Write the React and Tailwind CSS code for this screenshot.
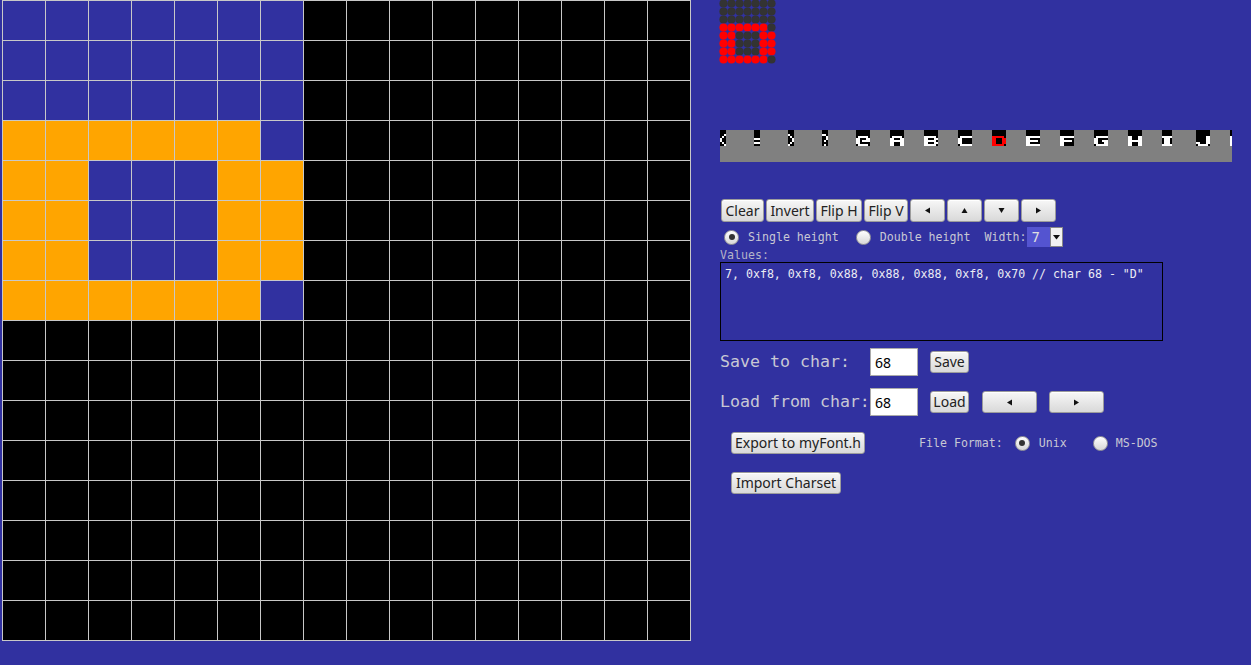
import React from "react";

const mono = { fontFamily: '"DejaVu Sans Mono", monospace' };

// glyph being edited: 7 columns used, 8 rows used
const pixels = [
  "0000000",
  "0000000",
  "0000000",
  "1111110",
  "1100011",
  "1100011",
  "1100011",
  "1111110",
];
const charWidth = 7;
const charHeight = 8;

const isOn = (r, c) => r < charHeight && c < charWidth && pixels[r][c] === "1";

// charset strip, 8 rows per glyph, drawn 2x
const strip = [
  ["...", "...", "..#", ".#.", "#..", "#..", ".#.", "..#"],
  ["...", "...", "...", "...", "###", "...", "###", "..."],
  ["...", "...", "#..", ".#.", "..#", "..#", ".#.", "#.."],
  ["...", "...", "##.", "..#", "..#", ".#.", "...", ".#."],
  [".......", ".......", ".......", ".#####.", "##...##", "##.####", "##.....", ".#####."],
  [".......", ".......", ".......", ".#####.", "##...##", "#######", "##...##", "##...##"],
  [".......", ".......", ".......", "######.", "##...##", "######.", "##...##", "######."],
  [".......", ".......", ".......", ".######", "##.....", "##.....", "##.....", ".######"],
  [".......", ".......", ".......", "######.", "##...##", "##...##", "##...##", "######."],
  [".......", ".......", ".......", "#######", "##.....", "######.", "##.....", "#######"],
  [".......", ".......", ".......", "#######", "##.....", "######.", "##.....", "##....."],
  [".......", ".......", ".......", ".######", "##.....", "##..###", "##...##", ".######"],
  [".......", ".......", ".......", "##...##", "##...##", "#######", "##...##", "##...##"],
  [".....", ".....", ".....", "#####", ".###.", ".###.", ".###.", "#####"],
  [".......", ".......", ".......", ".....##", ".....##", ".....##", "##...##", ".#####."],
  [".......", ".......", ".......", "##..##.", "##.##..", "####...", "##.##..", "##..##."],
];

function CharStrip() {
  return (
    <svg width="512" height="32" className="block">
      <rect width="512" height="32" fill="#808080" />
      {strip.map((g, i) => {
        const x0 = i * 34;
        const w = g[0].length * 2;
        const red = i === 8;
        return (
          <g key={i}>
            <rect x={x0} y="0" width={w} height="16" fill="#000" />
            {g.map((row, r) =>
              row.split("").map((ch, c) =>
                ch === "#" ? (
                  <rect key={r + "-" + c} x={x0 + c * 2} y={r * 2} width="2" height="2" fill={red ? "#ff0000" : "#fff"} />
                ) : null
              )
            )}
          </g>
        );
      })}
    </svg>
  );
}

function Preview() {
  const dots = [];
  for (let r = 0; r < 8; r++) {
    for (let c = 0; c < 7; c++) {
      dots.push(
        <circle key={r + "-" + c} cx={4.5 + c * 8} cy={3.5 + r * 8} r="4.1" fill={isOn(r, c) ? "#ff0000" : "#333333"} />
      );
    }
  }
  return (
    <svg width="57" height="64" className="block -ml-px">
      {dots}
    </svg>
  );
}

function Tri({ dir }) {
  const pts = {
    left: "6,0.5 6,6.5 1,3.5",
    right: "1,0.5 1,6.5 6,3.5",
    up: "0.5,6 6.5,6 3.5,1",
    down: "0.5,1 6.5,1 3.5,6",
  }[dir];
  return (
    <svg width="7" height="7" className="block">
      <polygon points={pts} fill="#111" />
    </svg>
  );
}

function Btn({ children, className = "" }) {
  return (
    <button
      className={
        "flex items-center justify-center rounded-[3px] border border-[#9c9c9c] bg-gradient-to-b from-[#f7f7f7] to-[#d9d9d9] text-[14px] leading-none text-[#222] shadow-[inset_0_1px_0_#fff] " +
        className
      }
      style={{ fontFamily: '"Noto Sans", sans-serif' }}
    >
      {children}
    </button>
  );
}

function Radio({ checked }) {
  return (
    <span className="flex h-[15px] w-[15px] shrink-0 items-center justify-center rounded-full border border-[#9a9a9a] bg-gradient-to-b from-white to-[#d8d8d8]">
      {checked && <span className="h-[6px] w-[6px] rounded-full bg-[#333]" />}
    </span>
  );
}

export default function App() {
  const cells = [];
  for (let r = 0; r < 16; r++) {
    for (let c = 0; c < 16; c++) {
      const inside = r < charHeight && c < charWidth;
      const bg = isOn(r, c) ? "bg-[#ffa500]" : inside ? "bg-[#3131a0]" : "bg-black";
      cells.push(<div key={r + "-" + c} className={bg} />);
    }
  }

  return (
    <div className="flex h-[665px] w-[1251px] overflow-hidden bg-[#3131a0]">
      <div className="ml-[2px] grid h-[641px] w-[689px] shrink-0 grid-cols-[repeat(16,42px)] grid-rows-[repeat(16,39px)] gap-px bg-[#c8c8c8] p-px">
        {cells}
      </div>

      <div className="ml-[29px] flex flex-col">
        <Preview />

        <div className="mt-[66px]">
          <CharStrip />
        </div>

        <div className="mt-[37px] flex h-[23px] gap-[2px] pl-px">
          <Btn className="w-[43px]">Clear</Btn>
          <Btn className="w-[48px]">Invert</Btn>
          <Btn className="w-[46px]">Flip H</Btn>
          <Btn className="w-[44px]">Flip V</Btn>
          <Btn className="w-[35px]"><Tri dir="left" /></Btn>
          <Btn className="w-[35px]"><Tri dir="up" /></Btn>
          <Btn className="w-[35px]"><Tri dir="down" /></Btn>
          <Btn className="w-[35px]"><Tri dir="right" /></Btn>
        </div>

        <div className="mt-[5px] flex h-[20px] items-center text-[11.6px] text-[#c8c8d4]" style={mono}>
          <span className="ml-[4px]"><Radio checked /></span>
          <span className="ml-[9px] pt-px">Single height</span>
          <span className="ml-[17px]"><Radio /></span>
          <span className="ml-[9px] pt-px">Double height</span>
          <span className="ml-[14px] pt-px">Width:</span>
          <span className="ml-px flex h-[20px]">
            <span className="flex w-[23px] items-center bg-[#5454d0] pl-[4px] text-[14px] text-[#e0e0e0]">7</span>
            <span className="flex w-[13px] items-center justify-center border border-[#888] bg-[#f2f2f2]">
              <svg width="7" height="5"><polygon points="0,0 7,0 3.5,4.5" fill="#111" /></svg>
            </span>
          </span>
        </div>

        <div className="mt-[1px] h-[14px] overflow-hidden pt-px text-[11.6px] leading-[12px] text-[#b4b4c8]" style={mono}>
          Values:
        </div>

        <div
          className="h-[79px] w-[443px] border border-black px-[4px] pt-[4px] text-[11.6px] leading-[14px] text-[#ececf4]"
          style={mono}
        >
          7, 0xf8, 0xf8, 0x88, 0x88, 0x88, 0xf8, 0x70 // char 68 - "D"
        </div>

        <div className="mt-[7px] flex h-[28px] items-center text-[16.6px] text-[#c8c8d4]" style={mono}>
          <span className="w-[150px]">Save to char:</span>
          <span
            className="flex h-[28px] w-[48px] items-center border border-[#aaa] bg-white pl-[4px] text-[14px] text-black"
            style={{ fontFamily: '"Noto Sans", sans-serif' }}
          >
            68
          </span>
          <Btn className="ml-[12px] h-[22px] w-[39px]">Save</Btn>
        </div>

        <div className="mt-[12px] flex h-[28px] items-center text-[16.6px] text-[#c8c8d4]" style={mono}>
          <span className="w-[150px] whitespace-nowrap">Load from char:</span>
          <span
            className="flex h-[28px] w-[48px] items-center border border-[#aaa] bg-white pl-[4px] text-[14px] text-black"
            style={{ fontFamily: '"Noto Sans", sans-serif' }}
          >
            68
          </span>
          <Btn className="ml-[12px] h-[22px] w-[39px]">Load</Btn>
          <Btn className="ml-[13px] h-[22px] w-[55px]"><Tri dir="left" /></Btn>
          <Btn className="ml-[12px] h-[22px] w-[55px]"><Tri dir="right" /></Btn>
        </div>

        <div className="mt-[16px] flex h-[22px] items-center text-[11.6px] text-[#c8c8d4]" style={mono}>
          <Btn className="ml-[11px] h-[22px] w-[134px]">Export to myFont.h</Btn>
          <span className="ml-[54px] pt-[2px]">File Format:</span>
          <span className="ml-[12px]"><Radio checked /></span>
          <span className="ml-[9px] pt-[2px]">Unix</span>
          <span className="ml-[26px]"><Radio /></span>
          <span className="ml-[8px] pt-[2px]">MS-DOS</span>
        </div>

        <div className="mt-[18px] flex h-[22px]">
          <Btn className="ml-[11px] h-[22px] w-[110px]">Import Charset</Btn>
        </div>
      </div>
    </div>
  );
}
